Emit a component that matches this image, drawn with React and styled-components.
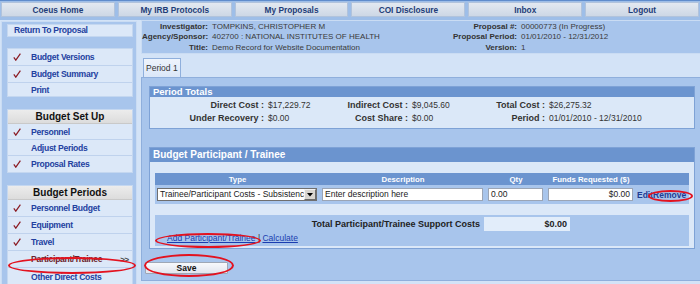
import styled, { createGlobalStyle, css } from 'styled-components'

const GlobalStyle = createGlobalStyle`
  html, body { margin: 0; padding: 0; background: #d3e3f7; }
  body { font-family: "Liberation Sans", Arial, sans-serif; }
  * { box-sizing: border-box; }
`

const Page = styled.div`
  position: relative;
  width: 700px;
  height: 284px;
  overflow: hidden;
  background: #d3e3f7;
`

/* top navigation */
const Nav = styled.nav`
  display: flex;
  gap: 3px;
  height: 20px;
  padding: 1px 1px 3px;
  border-top: 1px solid #5f8ccc;
  background: #9ebee8;
`

const NavTab = styled.div`
  flex: 1;
  display: flex;
  align-items: center;
  justify-content: center;
  background: linear-gradient(#e3e9f1, #cdd7e5);
  border: 1px solid #b1c3dc;
  color: #1e3d78;
  font-size: 8.3px;
  font-weight: bold;
`

const Layout = styled.div`
  display: flex;
  gap: 4px;
  height: 264px;
  padding-left: 1px;
`

/* left menu */
const Sidebar = styled.aside`
  flex: none;
  width: 136px;
  margin-top: 1px;
  padding: 2px 3px 0 5px;
  background: #a8c5ec;
  border: 1px solid #cadcf3;
  border-bottom: none;
`

const ReturnLink = styled.div`
  width: 126px;
  height: 13px;
  padding-left: 6px;
  line-height: 11px;
  background: #dce8f8;
  border: 1px solid #c4d7f0;
  color: #2341a0;
  font-size: 8.6px;
  font-weight: bold;
  letter-spacing: -0.3px;
`

const SideBox = styled.div`
  width: 126px;
  margin-top: ${(p) => p.$mt}px;
  background: #dce8f8;
  border: 1px solid #c4d7f0;
`

const SideHead = styled.div`
  height: 14px;
  line-height: 13px;
  border-bottom: 1px solid #c9c9c9;
  background: linear-gradient(#ececec, #dcdcdc);
  color: #111;
  font-size: 10px;
  font-weight: bold;
  text-align: center;
`

const SideItem = styled.div`
  display: flex;
  align-items: center;
  height: ${(p) => p.$h}px;
  border-bottom: 1px solid #bfd2ed;
  color: ${(p) => (p.$active ? '#6b1f2c' : '#2341a0')};
  font-size: 8.6px;
  font-weight: bold;
  letter-spacing: -0.3px;
  &:last-child { border-bottom: none; }
`

const CheckCell = styled.span`
  flex: none;
  display: flex;
  align-items: center;
  width: 23px;
  padding-left: 5px;
`

const Arrows = styled.span`
  margin-left: auto;
  padding-right: 3px;
  color: #444;
  font-size: 8px;
`

/* main column */
const Main = styled.main`
  flex: 1;
  display: flex;
  flex-direction: column;
  margin-right: -2px;
`

const Info = styled.div`
  display: grid;
  grid-template-columns: 66px 242px 67px 1fr;
  grid-auto-rows: 10.5px;
  align-items: center;
  height: 34px;
  background: #a8c5ec;
  border: 1px solid #cadcf3;
  color: #3a3a3a;
  font-size: 8px;
`

const InfoLabel = styled.span`
  text-align: right;
  white-space: nowrap;
  font-weight: bold;
  color: #333;
`

const InfoValue = styled.span`
  padding-left: 4px;
  white-space: nowrap;
`

const TabStrip = styled.div`
  display: flex;
  height: 23px;
  padding: 4px 0 0 2px;
`

const Tab = styled.div`
  height: 19px;
  padding: 0 2px;
  line-height: 18px;
  background: linear-gradient(#eef4fc, #dbe7f8);
  border: 1px solid #8fafdc;
  border-bottom: none;
  color: #333;
  font-size: 8.5px;
`

const TabPanel = styled.div`
  flex: none;
  height: 204px;
  padding: 8px 6px 0 7px;
  background: #a8c5ec;
  border: 1px solid #8fafdc;
`

const Panel = styled.section`
  margin-top: ${(p) => p.$mt || 0}px;
  background: #dbe8f8;
  border: 1px solid #7ea2d6;
`

const PanelHead = styled.div`
  height: ${(p) => p.$h}px;
  line-height: ${(p) => p.$h}px;
  padding-left: 3px;
  background: #6b94cf;
  color: #fff;
  font-size: ${(p) => p.$fs}px;
  font-weight: bold;
`

const TotalsGrid = styled.div`
  display: grid;
  grid-template-columns: 117px 63px 81px 59px 78px 1fr;
  grid-auto-rows: 13px;
  align-items: center;
  height: 31px;
  padding-top: 1px;
  color: #333;
`

const TLabel = styled.span`
  padding-right: 3px;
  text-align: right;
  white-space: nowrap;
  font-size: 9px;
  font-weight: bold;
`

const TValue = styled.span`
  padding-left: 1px;
  white-space: nowrap;
  font-size: 8.5px;
`

const PanelBody = styled.div`
  padding: 11px 5px 2px;
`

const cols = css`
  display: grid;
  grid-template-columns: 165px 166px 60px 90px 1fr;
  align-items: center;
`

const THead = styled.div`
  ${cols};
  height: 12px;
  background: #6b94cf;
  color: #fff;
  font-size: 7.8px;
  font-weight: bold;
  text-align: center;
`

const TRow = styled.div`
  ${cols};
  height: 19px;
  background: #a8c5ec;
`

const Field = styled.div`
  height: 13px;
  margin: 0 3px 0 2px;
  padding: 0 2px;
  overflow: hidden;
  white-space: nowrap;
  line-height: 11px;
  background: #fff;
  border: 1px solid #9ba5b5;
  color: #222;
  font-size: 8.5px;
  text-align: ${(p) => p.$align || 'left'};
`

const SelectBox = styled.div`
  position: relative;
  height: 13px;
  margin: 0 3px 0 2px;
  padding: 0 14px 0 2px;
  overflow: hidden;
  white-space: nowrap;
  line-height: 11px;
  background: #fff;
  border: 1px solid #6f6f6f;
  color: #222;
  font-size: 8.5px;
`

const SelectArrow = styled.span`
  position: absolute;
  top: 0;
  right: 0;
  display: flex;
  align-items: center;
  justify-content: center;
  width: 12px;
  height: 11px;
  background: #d8d5d0;
  border: 1px solid;
  border-color: #f4f4f4 #6d6d6d #6d6d6d #f4f4f4;
`

const Actions = styled.div`
  display: flex;
  padding-left: 1px;
  white-space: nowrap;
  color: #1f3c93;
  font-size: 8.5px;
  font-weight: bold;
`

const TotalsBlock = styled.div`
  height: 31px;
  margin-top: 11px;
  padding-top: 2px;
  background: #a8c5ec;
`

const TotalRow = styled.div`
  display: grid;
  grid-template-columns: 1fr 86px 115px;
  column-gap: 4px;
  align-items: center;
  height: 14px;
  color: #222;
  font-size: 9px;
  font-weight: bold;
`

const TotalLabel = styled.span`
  text-align: right;
  white-space: nowrap;
`

const TotalValue = styled.span`
  height: 14px;
  padding-right: 3px;
  line-height: 14px;
  background: #e2edfa;
  text-align: right;
`

const LinksRow = styled.div`
  height: 15px;
  padding-left: 12px;
  line-height: 15px;
  color: #333;
  font-size: 8.5px;
`

const Link = styled.span`
  color: #1a3db0;
  text-decoration: underline;
`

const SaveButton = styled.div`
  width: 83px;
  height: 12px;
  margin: 13px 0 0 -4px;
  line-height: 10px;
  background: linear-gradient(#f8f9fc, #e2e5ee);
  border: 1px solid #9fa7b5;
  border-radius: 1px;
  color: #111;
  font-size: 8.5px;
  font-weight: bold;
  text-align: center;
`

/* red hand-drawn marks over the screenshot */
const Ellipse = styled.div`
  position: absolute;
  left: ${(p) => p.$x}px;
  top: ${(p) => p.$y}px;
  width: ${(p) => p.$w}px;
  height: ${(p) => p.$h}px;
  border: 2px solid #e3121f;
  border-radius: 50%;
  pointer-events: none;
`

const Check = () => (
  <svg width="8" height="8" viewBox="0 0 8 8">
    <path d="M0.8 4.4 L2.8 7.2 L7.4 0.6" fill="none" stroke="#8b1c24" strokeWidth="1.2" />
  </svg>
)

const navItems = ['Coeus Home', 'My IRB Protocols', 'My Proposals', 'COI Disclosure', 'Inbox', 'Logout']

const menus = [
  {
    mt: 11,
    h: 17,
    items: [
      { label: 'Budget Versions', done: true },
      { label: 'Budget Summary', done: true },
      { label: 'Print', h: 13 },
    ],
  },
  {
    mt: 12,
    h: 16,
    title: 'Budget Set Up',
    items: [
      { label: 'Personnel', done: true },
      { label: 'Adjust Periods' },
      { label: 'Proposal Rates', done: true },
    ],
  },
  {
    mt: 12,
    h: 17,
    title: 'Budget Periods',
    items: [
      { label: 'Personnel Budget', done: true },
      { label: 'Equipment', done: true },
      { label: 'Travel', done: true },
      { label: 'Participant/Trainee', active: true },
      { label: 'Other Direct Costs' },
    ],
  },
]

const info = [
  ['Investigator:', 'TOMPKINS, CHRISTOPHER M', 'Proposal #:', '00000773 (In Progress)'],
  ['Agency/Sponsor:', '402700 : NATIONAL INSTITUTES OF HEALTH', 'Proposal Period:', '01/01/2010 - 12/31/2012'],
  ['Title:', 'Demo Record for Website Documentation', 'Version:', '1'],
]

const totals = [
  ['Direct Cost :', '$17,229.72', 'Indirect Cost :', '$9,045.60', 'Total Cost :', '$26,275.32'],
  ['Under Recovery :', '$0.00', 'Cost Share :', '$0.00', 'Period :', '01/01/2010 - 12/31/2010'],
]

export default function App() {
  return (
    <Page>
      <GlobalStyle />
      <Nav>
        {navItems.map((n) => (
          <NavTab key={n}>{n}</NavTab>
        ))}
      </Nav>
      <Layout>
        <Sidebar>
          <ReturnLink>Return To Proposal</ReturnLink>
          {menus.map((m, i) => (
            <SideBox key={i} $mt={m.mt}>
              {m.title && <SideHead>{m.title}</SideHead>}
              {m.items.map((it) => (
                <SideItem key={it.label} $h={it.h || m.h} $active={it.active}>
                  <CheckCell>{it.done && <Check />}</CheckCell>
                  {it.label}
                  {it.active && <Arrows>&gt;&gt;</Arrows>}
                </SideItem>
              ))}
            </SideBox>
          ))}
        </Sidebar>

        <Main>
          <Info>
            {info.map((r) => [
              <InfoLabel key={r[0]}>{r[0]}</InfoLabel>,
              <InfoValue key={r[1]}>{r[1]}</InfoValue>,
              <InfoLabel key={r[2]}>{r[2]}</InfoLabel>,
              <InfoValue key={r[3] + r[2]}>{r[3]}</InfoValue>,
            ])}
          </Info>
          <TabStrip>
            <Tab>Period 1</Tab>
          </TabStrip>
          <TabPanel>
            <Panel>
              <PanelHead $h={10} $fs={9.5}>Period Totals</PanelHead>
              <TotalsGrid>
                {totals.map((r) =>
                  r.map((c, j) =>
                    j % 2 === 0 ? <TLabel key={c}>{c}</TLabel> : <TValue key={c + j}>{c}</TValue>
                  )
                )}
              </TotalsGrid>
            </Panel>

            <Panel $mt={18}>
              <PanelHead $h={14} $fs={10}>Budget Participant / Trainee</PanelHead>
              <PanelBody>
                <THead>
                  <span>Type</span>
                  <span>Description</span>
                  <span>Qty</span>
                  <span>Funds Requested ($)</span>
                  <span />
                </THead>
                <TRow>
                  <SelectBox>
                    Trainee/Participant Costs - Subsistence
                    <SelectArrow>
                      <svg width="6" height="4" viewBox="0 0 6 4">
                        <path d="M0 0 H6 L3 3.5 Z" fill="#000" />
                      </svg>
                    </SelectArrow>
                  </SelectBox>
                  <Field>Enter description here</Field>
                  <Field>0.00</Field>
                  <Field $align="right">$0.00</Field>
                  <Actions>
                    <span>Edit</span>
                    <span>Remove</span>
                  </Actions>
                </TRow>
                <TotalsBlock>
                  <TotalRow>
                    <TotalLabel>Total Participant/Trainee Support Costs</TotalLabel>
                    <TotalValue>$0.00</TotalValue>
                    <span />
                  </TotalRow>
                  <LinksRow>
                    <Link>Add Participant/Trainee</Link> | <Link>Calculate</Link>
                  </LinksRow>
                </TotalsBlock>
              </PanelBody>
            </Panel>

            <SaveButton>Save</SaveButton>
          </TabPanel>
        </Main>
      </Layout>

      <Ellipse $x={8} $y={257} $w={128} $h={17} />
      <Ellipse $x={155} $y={233} $w={106} $h={15} />
      <Ellipse $x={144} $y={254} $w={90} $h={23} />
      <Ellipse $x={648} $y={190} $w={45} $h={12} />
    </Page>
  )
}
